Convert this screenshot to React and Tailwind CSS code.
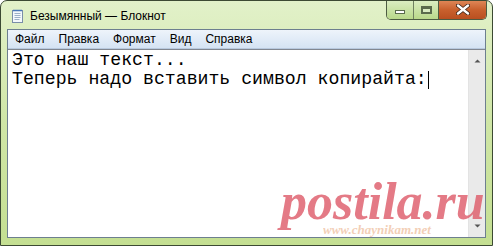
import React from 'react';

const MenuItem = ({ children }) => (
  <span className="px-[7px] text-[12px] leading-[18px] text-black">{children}</span>
);

export default function App() {
  return (
    <div className="relative flex h-[246px] w-[493px] flex-col overflow-hidden rounded-t-[7px] border border-[#3c4a33] bg-gradient-to-b from-[#e2f1c9] via-[#cfe6a6] to-[#c4df92] px-[6px] pb-[7px] font-['Liberation_Sans',sans-serif]">
      {/* Title bar */}
      <div className="relative flex h-[28px] shrink-0 items-center pl-[5px]">
        <svg width="12" height="14" viewBox="0 0 12 14" className="mr-[6px] mt-[2px]">
          <rect x="0.5" y="1.5" width="10" height="12" fill="#f4f8fc" stroke="#7a8ea8" />
          <path d="M2.5 4.5h6M2.5 6.5h6M2.5 8.5h6M2.5 10.5h5" stroke="#9db0c8" strokeWidth="1" />
          <path d="M1 1.5h9" stroke="#4a78b8" strokeWidth="1.5" />
        </svg>
        <span className="mt-[2px] text-[12px] text-black">Безымянный — Блокнот</span>

        {/* Window buttons */}
        <div className="absolute right-[-1px] top-[-1px] flex h-[20px] overflow-hidden rounded-b-[5px] border border-t-0 border-[#4d5c42]">
          <div className="flex w-[27px] items-center justify-center border-r border-[#6f8060] bg-gradient-to-b from-[#dceec4] to-[#b9d88a]">
            <div className="mt-[4px] h-[4px] w-[10px] border border-[#5a6a4c] bg-white" />
          </div>
          <div className="flex w-[25px] items-center justify-center border-r border-[#4d5c42] bg-gradient-to-b from-[#dceec4] to-[#b9d88a]">
            <div className="h-[8px] w-[11px] border-[2px] border-t-[3px] border-[#5a6a4c] bg-[#d9ebc2]" />
          </div>
          <div className="flex w-[47px] items-center justify-center bg-gradient-to-b from-[#e08a5a] via-[#c9612e] to-[#b94f20]">
            <svg width="14" height="11" viewBox="0 0 14 11">
              <path d="M2 1.5l10 8M12 1.5l-10 8" stroke="#3b2416" strokeWidth="4" strokeLinecap="round" />
              <path d="M2 1.5l10 8M12 1.5l-10 8" stroke="#ffffff" strokeWidth="2.4" strokeLinecap="round" />
            </svg>
          </div>
        </div>
      </div>

      {/* Client area */}
      <div className="flex flex-1 flex-col border border-[#6d7f8f]">
        <div className="flex h-[19px] shrink-0 items-center border-b border-[#b8c9de] bg-gradient-to-b from-[#eef4fb] to-[#d5e3f3]">
          <MenuItem>Файл</MenuItem>
          <MenuItem>Правка</MenuItem>
          <MenuItem>Формат</MenuItem>
          <MenuItem>Вид</MenuItem>
          <MenuItem>Справка</MenuItem>
        </div>
        <div className="flex flex-1 border-t border-[#828790]">
          <div className="flex-1 bg-white pl-[4px] pt-[1px] font-['Liberation_Mono',monospace] text-[18.2px] leading-[19px] text-black">
            <div>Это наш текст...</div>
            <div className="flex items-center">
              Теперь надо вставить символ копирайта:
              <span className="ml-[1px] inline-block h-[18px] w-[1px] bg-black" />
            </div>
          </div>
          <div className="flex w-[17px] flex-col justify-between border-l border-[#e3e3e3] bg-[#eaeaea] py-[8px]">
            <svg width="17" height="5" viewBox="0 0 17 5">
              <path d="M5.5 4.5l3-3 3 3z" fill="#555" />
            </svg>
            <svg width="17" height="5" viewBox="0 0 17 5">
              <path d="M5.5 0.5l3 3 3-3z" fill="#555" />
            </svg>
          </div>
        </div>
      </div>

      {/* Watermark */}
      <div className="pointer-events-none absolute left-[280px] top-[172px] font-['Liberation_Serif',serif] text-[52px] font-bold italic leading-[58px] text-[#de5a68] opacity-80">
        postila.ru
      </div>
      <div className="pointer-events-none absolute left-[322px] top-[222px] font-['Liberation_Serif',serif] text-[13px] font-bold italic leading-[14px] text-[#e8a070] opacity-50">
        www.chaynikam.net
      </div>
    </div>
  );
}
